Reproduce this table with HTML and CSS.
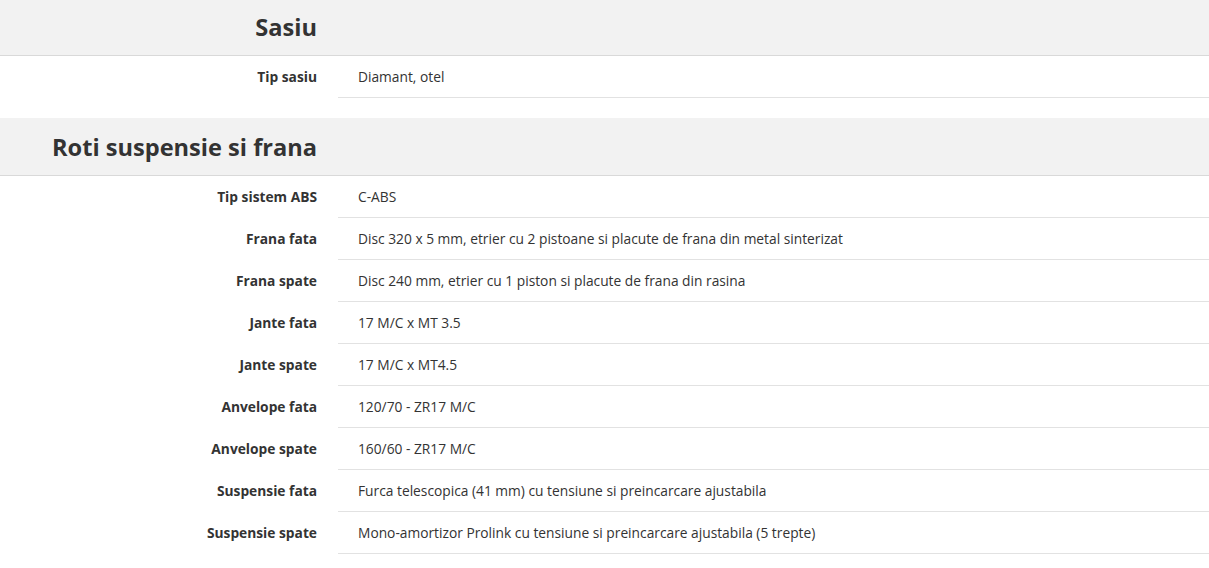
FILE: index.html
```html
<!DOCTYPE html>
<html lang="ro">
<head>
<meta charset="utf-8">
<title>Specificatii</title>
<link rel="stylesheet" href="styles.css">
</head>
<body>
<div class="page">
  <section class="spec">
    <div class="spec-head"><h2 class="spec-title">Sasiu</h2></div>
    <div class="spec-row"><div class="spec-label">Tip sasiu</div><div class="spec-value">Diamant, otel</div></div>
  </section>
  <section class="spec">
    <div class="spec-head"><h2 class="spec-title">Roti suspensie si frana</h2></div>
    <div class="spec-row"><div class="spec-label">Tip sistem ABS</div><div class="spec-value">C-ABS</div></div>
    <div class="spec-row"><div class="spec-label">Frana fata</div><div class="spec-value">Disc 320 x 5 mm, etrier cu 2 pistoane si placute de frana din metal sinterizat</div></div>
    <div class="spec-row"><div class="spec-label">Frana spate</div><div class="spec-value">Disc 240 mm, etrier cu 1 piston si placute de frana din rasina</div></div>
    <div class="spec-row"><div class="spec-label">Jante fata</div><div class="spec-value">17 M/C x MT 3.5</div></div>
    <div class="spec-row"><div class="spec-label">Jante spate</div><div class="spec-value">17 M/C x MT4.5</div></div>
    <div class="spec-row"><div class="spec-label">Anvelope fata</div><div class="spec-value">120/70 - ZR17 M/C</div></div>
    <div class="spec-row"><div class="spec-label">Anvelope spate</div><div class="spec-value">160/60 - ZR17 M/C</div></div>
    <div class="spec-row"><div class="spec-label">Suspensie fata</div><div class="spec-value">Furca telescopica (41 mm) cu tensiune si preincarcare ajustabila</div></div>
    <div class="spec-row"><div class="spec-label">Suspensie spate</div><div class="spec-value">Mono-amortizor Prolink cu tensiune si preincarcare ajustabila (5 trepte)</div></div>
  </section>
</div>
</body>
</html>
```

FILE: styles.css
```css
html, body {
  margin: 0;
  padding: 0;
  background: #fff;
}
body {
  font-family: "Open Sans", "Liberation Sans", sans-serif;
  color: #333;
}
.page {
  margin-top: -2px;
}
.spec {
  margin-bottom: 20px;
}
.spec-head {
  display: grid;
  grid-template-columns: 338px 1fr;
  height: 57px;
  align-items: center;
  background: #f2f2f2;
  border-bottom: 1px solid #d9d9d9;
}
.spec-title {
  margin: 0;
  padding: 2px 21px 0 0;
  text-align: right;
  font-size: 23.6px;
  font-weight: 700;
  color: #333;
  line-height: 1;
  white-space: nowrap;
}
.spec-row {
  display: grid;
  grid-template-columns: 338px 1fr;
  font-size: 13.78px;
  line-height: 20px;
}
.spec-label {
  padding: 11px 21px 11px 0;
  text-align: right;
  font-weight: 700;
  color: #333;
}
.spec-value {
  padding: 11px 20px 10px 20px;
  border-bottom: 1px solid #e2e2e2;
  color: #333;
}
```
